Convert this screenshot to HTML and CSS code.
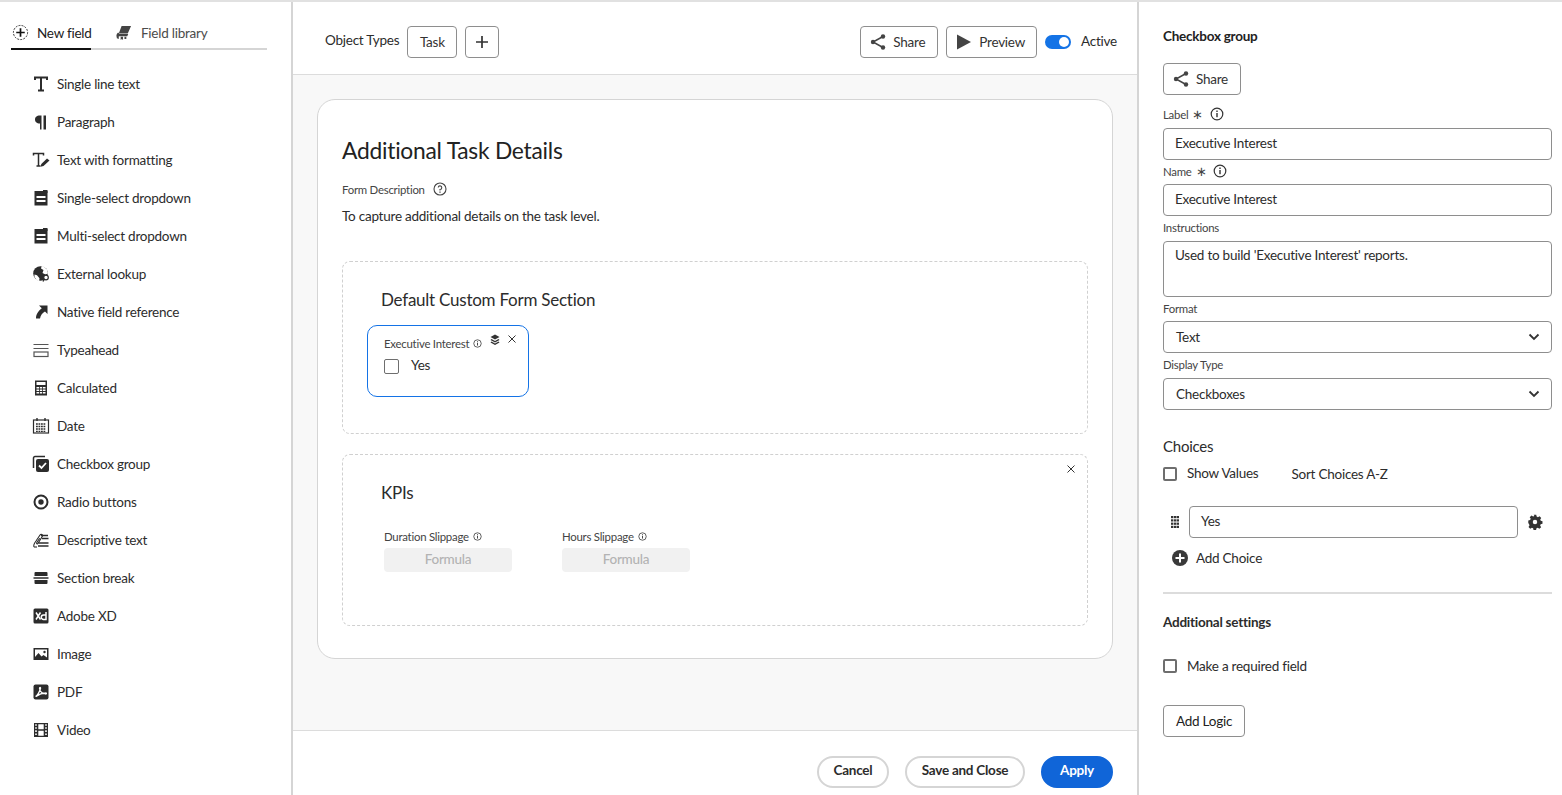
FILE: index.html
```html
<!DOCTYPE html>
<html>
<head>
    <meta charset="utf-8">
    <title>Custom Form</title>
    <link rel="stylesheet" href="styles.css">
</head>
<body>
<svg class="defs" width="0" height="0">
    <symbol id="i-share" viewBox="0 0 18 18"><path d="M14 3.5 4 9l10 5.500" fill="none" stroke="currentColor" stroke-width="1.500"/><circle cx="14" cy="3.500" r="2.200" fill="currentColor"/><circle cx="4" cy="9" r="2.200" fill="currentColor"/><circle cx="14" cy="14.500" r="2.200" fill="currentColor"/></symbol>
    <symbol id="i-info" viewBox="0 0 14 14"><circle cx="7" cy="7" r="5.800" fill="none" stroke="currentColor" stroke-width="1.200"/><rect x="6.300" y="6" width="1.400" height="4.200" fill="currentColor"/><rect x="6.300" y="3.500" width="1.400" height="1.500" fill="currentColor"/></symbol>
</svg>

<div class="app">
    <aside class="sidebar">
        <div class="tabs">
            <div class="tab tab-active">
                <svg class="tab-icon" viewBox="0 0 18 18"><circle cx="9" cy="9" r="7.500" fill="none" stroke="#222" stroke-width="1" stroke-dasharray="2 1.300"/><path d="M9 4.500v9M4.500 9h9" stroke="#111" stroke-width="1.800"/></svg>
                New field
            </div>
            <div class="tab">
                <svg class="tab-icon" viewBox="0 0 18 18"><path d="M7 2h10l-3.500 8H4zM1.500 12.500c0-1.500 1-3 2-3.500l1 1.500h9.500l-1 2.500H4v3l-2-1z" fill="#444"/><path d="M6 13.500h2.500v3.500l-1.200-1-1.300 1zM10 13.500h2v2.500h-2z" fill="#444"/></svg>
                Field library
            </div>
        </div>
        <ul class="field-list">
            <li><svg viewBox="0 0 18 18"><path d="M3 5V2.500h12V5M9 2.500v13M6 15.500h6" fill="none" stroke="#2c2c2c" stroke-width="2"/></svg>Single line text</li>
            <li><svg viewBox="0 0 18 18"><path d="M8 2.500C4.500 2.500 3 4.500 3 6.500s1.500 4 5 4v6h1.500v-14zM11.500 2.500H14v14h-2.500z" fill="#2c2c2c"/></svg>Paragraph</li>
            <li><svg viewBox="0 0 18 18"><path d="M1.500 4.500V2.500h10v2M6.500 2.500v12.500M4.500 15h4" fill="none" stroke="#2c2c2c" stroke-width="1.500"/><path d="M15 7.500l2.500 2-6 5.500-3 .8.800-2.800z" fill="#2c2c2c"/></svg>Text with formatting</li>
            <li><svg viewBox="0 0 18 18"><path d="M2.500 2h13v14.500h-13zM4.500 7v2h9V7zm0 4v2h9v-2z" fill="#2c2c2c" fill-rule="evenodd"/><rect x="11" y="1" width="4.500" height="3" fill="#2c2c2c"/></svg>Single-select dropdown</li>
            <li><svg viewBox="0 0 18 18"><path d="M2.500 2h13v14.500h-13zM4.500 7v2h9V7zm0 4v2h9v-2z" fill="#2c2c2c" fill-rule="evenodd"/><rect x="11" y="1" width="4.500" height="3" fill="#2c2c2c"/></svg>Multi-select dropdown</li>
            <li><svg viewBox="0 0 18 18"><circle cx="8.500" cy="8.500" r="7.300" fill="#2c2c2c"/><path d="M9.500 1.500l1.500-.5 4 3.500 1 4-2.500 1-3-1.500 1-3-2.500-1.500zM2.500 9.500l2.500.8 2.500 3-.5 3-2.500-1.300-2-3z" fill="#fff"/><circle cx="14" cy="12.500" r="2.300" fill="#fff" stroke="#2c2c2c" stroke-width="1.200"/><path d="M12.500 14l-1.500 2.500" stroke="#2c2c2c" stroke-width="1.300"/></svg>External lookup</li>
            <li><svg viewBox="0 0 18 18"><path d="M7 2.500h8.500V11L13 8.500C10.500 10 8.500 12 8 15.500H4C4 11 6.500 8 9.800 5.300z" fill="#2c2c2c"/></svg>Native field reference</li>
            <li><svg viewBox="0 0 18 18"><path d="M1.500 3.500h15M1.500 7.500h15" stroke="#555" stroke-width="1.200"/><rect x="2" y="11" width="14" height="4.500" fill="none" stroke="#555" stroke-width="1.200"/></svg>Typeahead</li>
            <li><svg viewBox="0 0 18 18"><path d="M3 1.500h12v15H3zM4.500 3v3h9V3zm0 5v1.500H7V8zm3.300 0v1.500h2.400V8zm3.200 0v1.500h2.500V8zM4.500 10.500V12H7v-1.500zm3.300 0V12h2.400v-1.500zm3.200 0V12h2.500v-1.500zM4.500 13v1.500H7V13zm3.300 0v1.500h2.400V13zm3.200 0v1.500h2.500V13z" fill="#2c2c2c" fill-rule="evenodd"/></svg>Calculated</li>
            <li><svg viewBox="0 0 18 18"><rect x="1.500" y="3" width="15" height="13" fill="none" stroke="#2c2c2c" stroke-width="1.200"/><path d="M5 1v3M13 1v3" stroke="#2c2c2c" stroke-width="1.400"/><path d="M4 7h10M4 9.500h10M4 12h10M4 14.300h10" stroke="#2c2c2c" stroke-width="1.300" stroke-dasharray="1.800 .7"/></svg>Date</li>
            <li><svg viewBox="0 0 18 18"><path d="M1.500 13V3a1.500 1.500 0 0 1 1.500-1.500h10" fill="none" stroke="#2c2c2c" stroke-width="1.500"/><rect x="4" y="4" width="13" height="13" rx="2" fill="#2c2c2c"/><path d="M7 10.500l2.500 2.500 4.500-5" fill="none" stroke="#fff" stroke-width="1.800"/></svg>Checkbox group</li>
            <li><svg viewBox="0 0 18 18"><circle cx="9" cy="9" r="6.500" fill="none" stroke="#2c2c2c" stroke-width="2"/><circle cx="9" cy="9" r="2.700" fill="#2c2c2c"/></svg>Radio buttons</li>
            <li><svg viewBox="0 0 18 18"><path d="M2 16c-1-2 .5-4 2-6l4-6c1-1.300 3-.5 2.500 1L6 12.500c-.7.800-1.800.2-1.300-.8l3-4.500" fill="none" stroke="#2c2c2c" stroke-width="1.100"/><path d="M9 4.500h7M10 7.500h6.500M6.500 12h10M6 15h10.500" stroke="#2c2c2c" stroke-width="1.300"/><path d="M2 16h3" stroke="#2c2c2c" stroke-width="1.100"/></svg>Descriptive text</li>
            <li><svg viewBox="0 0 18 18"><path d="M3.500 3h11a1 1 0 0 1 1 1v3h-13V4a1 1 0 0 1 1-1zM1.500 8.200h15v1.600h-15zM2.500 11h13v3a1 1 0 0 1-1 1h-11a1 1 0 0 1-1-1z" fill="#2c2c2c"/></svg>Section break</li>
            <li><svg viewBox="0 0 18 18"><path d="M3 1.500h12A1.500 1.500 0 0 1 16.500 3v12a1.500 1.500 0 0 1-1.500 1.500H3A1.500 1.500 0 0 1 1.500 15V3A1.500 1.500 0 0 1 3 1.500z" fill="#2c2c2c"/><path d="M4 5.500l4.500 7M8.500 5.500l-4.500 7" stroke="#fff" stroke-width="1.500"/><path d="M14 5v7.500h-2.500a2 2 0 0 1 0-4.500H14" fill="none" stroke="#fff" stroke-width="1.500"/></svg>Adobe XD</li>
            <li><svg viewBox="0 0 18 18"><path d="M1.500 3h15v12h-15zM3 4.500v7.500L6.500 8l3 3.500 2-1.500 3.500 2.500V4.500z" fill="#2c2c2c" fill-rule="evenodd"/><circle cx="12.500" cy="7" r="1.200" fill="#2c2c2c"/></svg>Image</li>
            <li><svg viewBox="0 0 18 18"><rect x="1.500" y="1.500" width="15" height="15" rx="2" fill="#2c2c2c"/><path d="M3.500 13.500c2-1 3.500-3.500 5-8 .3-1.500-1-1.500-1 0 .5 3 2.500 5 6.500 5.500.8-.5.500-1.200-.5-1-3 0-6 1-9.500 3.500" fill="none" stroke="#fff" stroke-width="1.300"/></svg>PDF</li>
            <li><svg viewBox="0 0 18 18"><path d="M2 2h14v14H2zM3.200 3.200v1.600h1.600V3.200zm0 3v1.600h1.600V6.200zm0 3.100v1.600h1.600V9.300zm0 3.200v1.600h1.600v-1.600zM13.200 3.200v1.600h1.600V3.200zm0 3v1.600h1.600V6.200zm0 3.100v1.600h1.600V9.300zm0 3.200v1.600h1.600v-1.600zM6.300 3.200v5h5.400v-5zm0 6.600v5h5.400v-5z" fill="#2c2c2c" fill-rule="evenodd"/></svg>Video</li>
        </ul>
    </aside>

    <main class="center">
        <header class="topbar">
            <div class="topbar-left">
                <span class="object-label">Object Types</span>
                <button class="btn btn-task">Task</button>
                <button class="btn btn-plus"><svg viewBox="0 0 14 14"><path d="M7 1v12M1 7h12" stroke="#333" stroke-width="1.700"/></svg></button>
            </div>
            <div class="topbar-right">
                <button class="btn btn-with-icon"><svg class="btn-icon" viewBox="0 0 18 18"><use href="#i-share"/></svg>Share</button>
                <button class="btn btn-with-icon btn-preview"><svg class="btn-icon" viewBox="0 0 18 18"><path d="M2 1.500l14 7.500-14 7.500z" fill="#444"/></svg>Preview</button>
                <span class="toggle"></span>
                <span class="active-label">Active</span>
            </div>
        </header>

        <div class="canvas">
            <section class="form-card">
                <h1>Additional Task Details</h1>
                <div class="form-desc-label">Form Description
                    <svg class="help" viewBox="0 0 14 14"><circle cx="7" cy="7" r="6" fill="none" stroke="#444" stroke-width="1.100"/><path d="M5.200 5.500A1.800 1.800 0 1 1 7 7.500v1" fill="none" stroke="#444" stroke-width="1.100"/><rect x="6.400" y="9.500" width="1.200" height="1.300" fill="#444"/></svg>
                </div>
                <p class="form-desc">To capture additional details on the task level.</p>

                <div class="section">
                    <h2>Default Custom Form Section</h2>
                    <div class="field-card">
                        <div class="field-title">Executive Interest <svg class="info-sm" viewBox="0 0 14 14"><use href="#i-info"/></svg></div>
                        <svg class="card-layers" viewBox="0 0 12 12"><path d="M6 .5l4.500 2.500L6 5.500 1.500 3z" fill="#333"/><path d="M2.500 5 6 7l3.500-2 1 1L6 8.500 1.500 6zM2.500 7.500 6 9.500l3.500-2 1 1L6 11 1.500 8.500z" fill="#333"/></svg>
                        <svg class="card-close" viewBox="0 0 10 10"><path d="M1.500 1.500l7 7M8.500 1.500l-7 7" stroke="#333" stroke-width="1"/></svg>
                        <div class="field-check"><span class="check check-card"></span>Yes</div>
                    </div>
                </div>

                <div class="section section-kpi">
                    <svg class="section-close" viewBox="0 0 10 10"><path d="M1.500 1.500l7 7M8.500 1.500l-7 7" stroke="#333" stroke-width="1"/></svg>
                    <h2>KPIs</h2>
                    <div class="kpi-row">
                        <div class="kpi">
                            <div class="field-title">Duration Slippage <svg class="info-sm" viewBox="0 0 14 14"><use href="#i-info"/></svg></div>
                            <div class="formula">Formula</div>
                        </div>
                        <div class="kpi">
                            <div class="field-title">Hours Slippage <svg class="info-sm" viewBox="0 0 14 14"><use href="#i-info"/></svg></div>
                            <div class="formula">Formula</div>
                        </div>
                    </div>
                </div>
            </section>
        </div>

        <footer class="footer">
            <button class="pill">Cancel</button>
            <button class="pill pill-wide">Save and Close</button>
            <button class="pill pill-primary">Apply</button>
        </footer>
    </main>

    <aside class="props">
        <h3>Checkbox group</h3>
        <button class="btn btn-with-icon btn-share"><svg class="btn-icon" viewBox="0 0 18 18"><use href="#i-share"/></svg>Share</button>

        <div class="prop-label prop-first">Label <span class="star">∗</span> <svg class="info" viewBox="0 0 14 14"><use href="#i-info"/></svg></div>
        <div class="input">Executive Interest</div>
        <div class="prop-label">Name <span class="star">∗</span> <svg class="info" viewBox="0 0 14 14"><use href="#i-info"/></svg></div>
        <div class="input">Executive Interest</div>
        <div class="prop-label prop-instr">Instructions</div>
        <div class="input input-area">Used to build 'Executive Interest' reports.</div>
        <div class="prop-label prop-format">Format</div>
        <div class="input input-select">Text<svg class="chev" viewBox="0 0 12 8"><path d="M1.500 1.500 6 6l4.500-4.500" fill="none" stroke="#333" stroke-width="1.800"/></svg></div>
        <div class="prop-label prop-instr">Display Type</div>
        <div class="input input-select">Checkboxes<svg class="chev" viewBox="0 0 12 8"><path d="M1.500 1.500 6 6l4.500-4.500" fill="none" stroke="#333" stroke-width="1.800"/></svg></div>

        <h4>Choices</h4>
        <div class="choice-opts">
            <span class="check"></span><span class="show-values">Show Values</span>
            <span class="sort">Sort Choices A-Z</span>
        </div>
        <div class="choice-row">
            <svg class="grip" viewBox="0 0 8 12"><g fill="#333"><rect x="0" y="0" width="2.400" height="2.200"/><rect x="3" y="0" width="2.400" height="2.200"/><rect x="5.800" y="0" width="2.200" height="2.200"/><rect x="0" y="3.300" width="2.400" height="2.200"/><rect x="3" y="3.300" width="2.400" height="2.200"/><rect x="5.800" y="3.300" width="2.200" height="2.200"/><rect x="0" y="6.600" width="2.400" height="2.200"/><rect x="3" y="6.600" width="2.400" height="2.200"/><rect x="5.800" y="6.600" width="2.200" height="2.200"/><rect x="0" y="9.800" width="2.400" height="2.200"/><rect x="3" y="9.800" width="2.400" height="2.200"/><rect x="5.800" y="9.800" width="2.200" height="2.200"/></g></svg>
            <div class="input input-choice">Yes</div>
            <svg class="gear" viewBox="0 0 18 18"><path d="M7.500 1h3l.5 2.300 1.500.7 2-1.200 2 2.100-1.200 2 .6 1.500 2.100.6v3l-2.200.5-.6 1.500 1.200 2-2.100 2-2-1.200-1.500.6-.5 2.100h-3l-.5-2.200-1.500-.6-2 1.200-2-2.100 1.200-2-.7-1.500L1 11V8l2.200-.5.700-1.500-1.200-2 2.100-2 2 1.200 1.500-.6z" transform="translate(.5 -.2) scale(.94)" fill="#333"/><circle cx="9" cy="9" r="2.500" fill="#fff"/></svg>
        </div>
        <div class="add-choice">
            <svg viewBox="0 0 16 16"><circle cx="8" cy="8" r="8" fill="#3a3a3a"/><path d="M8 3.500v9M3.500 8h9" stroke="#fff" stroke-width="2"/></svg>
            Add Choice
        </div>

        <hr>
        <div class="settings-title">Additional settings</div>
        <div class="required-row"><span class="check"></span>Make a required field</div>
        <button class="btn btn-logic">Add Logic</button>
    </aside>
</div>
</body>
</html>
```

FILE: styles.css
```css
* {
    box-sizing: border-box;
}

html, body {
    margin: 0;
    height: 100%;
    overflow: hidden;
}

body {
    font-family: "Lato", "Open Sans", sans-serif;
    font-size: 13.5px;
    letter-spacing: -0.018em;
    color: #2c2c2c;
    background: #fff;
}

.defs {
    display: none;
}

.app {
    display: grid;
    grid-template-columns: 293px 846px 1fr;
    height: 795px;
    border-top: 2px solid #e1e1e1;
}

/* left column */
.sidebar {
    border-right: 2px solid #d5d5d5;
    padding: 20px 24px 0 11px;
}

.tabs {
    display: flex;
    gap: 23px;
    height: 28px;
    border-bottom: 2px solid #d5d5d5;
}

.tab {
    display: flex;
    align-items: center;
    gap: 9px;
    height: 28px;
    padding-bottom: 7px;
    color: #4b4b4b;
    white-space: nowrap;
}

.tab-active {
    width: 80px;
    gap: 8px;
    color: #222;
    border-bottom: 2px solid #111;
    padding-bottom: 5px;
}

.tab-icon {
    width: 17px;
    height: 17px;
    margin-left: 1px;
    flex-shrink: 0;
}

.field-list {
    list-style: none;
    margin: 15px 0 0;
    padding: 0 0 0 21px;
}

.field-list li {
    display: flex;
    align-items: center;
    gap: 7px;
    height: 38px;
}

.field-list svg {
    width: 18px;
    height: 18px;
    flex-shrink: 0;
}

/* middle column */
.center {
    display: flex;
    flex-direction: column;
    min-height: 0;
    border-right: 2px solid #d5d5d5;
}

.topbar {
    height: 73px;
    flex-shrink: 0;
    display: flex;
    align-items: center;
    justify-content: space-between;
    padding: 7px 20px 0 32px;
    border-bottom: 1px solid #dcdcdc;
}

.topbar-left, .topbar-right {
    display: flex;
    align-items: center;
    gap: 8px;
}

.object-label {
    margin-top: -4px;
}

.btn {
    display: inline-flex;
    align-items: center;
    height: 32px;
    padding: 0 12px;
    border: 1px solid #8e8e8e;
    border-radius: 4px;
    background: #fff;
    font: inherit;
    letter-spacing: inherit;
    color: #333;
}

.btn-task {
    width: 50px;
    justify-content: center;
    padding: 0;
}

.btn-with-icon {
    padding-left: 8px;
}

.btn-preview {
    padding-right: 11px;
}

.btn-plus {
    width: 34px;
    justify-content: center;
    padding: 0;
}

.btn-plus svg {
    width: 14px;
    height: 14px;
}

.btn-icon {
    width: 18px;
    height: 18px;
    margin-right: 6px;
    color: #444;
}

.toggle {
    position: relative;
    width: 26px;
    height: 14px;
    border-radius: 7px;
    background: #1473e6;
}

.toggle::after {
    content: "";
    position: absolute;
    right: 2px;
    top: 2px;
    width: 10px;
    height: 10px;
    border-radius: 50%;
    background: #fff;
}

.active-label {
    margin-left: 2px;
    margin-top: -2px;
}

.canvas {
    flex: 1;
    background: #f8f8f8;
    padding: 24px 24px 0;
    min-height: 0;
}

.form-card {
    height: 560px;
    padding: 0 24px;
    background: #fff;
    border: 1px solid #d5d5d5;
    border-radius: 18px;
}

h1 {
    margin: 35px 0 0;
    font-size: 22.8px;
    line-height: 30px;
    font-weight: 400;
    color: #222;
}

.form-desc-label {
    display: flex;
    align-items: center;
    gap: 8px;
    margin-top: 15px;
    height: 18px;
    font-size: 11.4px;
    color: #444;
}

.help {
    width: 14px;
    height: 14px;
}

.form-desc {
    margin: 9px 0 0;
    line-height: 18px;
}

.section {
    position: relative;
    height: 173px;
    margin-top: 36px;
    padding: 26px 24px 0;
    border: 1px dashed #d0d0d0;
    border-radius: 8px;
}

.section-kpi {
    height: 172px;
    margin-top: 20px;
}

h2 {
    margin: 0 0 0 14px;
    font-size: 17px;
    line-height: 24px;
    font-weight: 400;
}

.field-card {
    position: relative;
    width: 162px;
    height: 72px;
    margin-top: 13px;
    padding: 8px 16px;
    border: 1px solid #1473e6;
    border-radius: 10px;
}

.field-title {
    display: flex;
    align-items: center;
    gap: 4px;
    height: 18px;
    font-size: 11.4px;
    color: #444;
}

.info-sm {
    width: 9px;
    height: 9px;
    color: #333;
}

.card-layers {
    position: absolute;
    top: 8px;
    left: 121px;
    width: 12px;
    height: 12px;
}

.card-close {
    position: absolute;
    top: 8px;
    left: 139px;
    width: 10px;
    height: 10px;
}

.section-close {
    position: absolute;
    top: 9px;
    right: 11px;
    width: 10px;
    height: 10px;
}

.field-check {
    display: flex;
    align-items: center;
    gap: 12px;
    margin-top: 3px;
    height: 20px;
}

.check {
    display: inline-block;
    width: 14px;
    height: 14px;
    flex-shrink: 0;
    border: 2px solid #6e6e6e;
    border-radius: 2px;
    background: #fff;
}

.check-card {
    width: 15px;
    height: 15px;
    margin-top: 3px;
    border: 1px solid #6e6e6e;
}

.kpi-row {
    display: flex;
    gap: 50px;
    margin-top: 22px;
    padding-left: 17px;
}

.kpi {
    width: 128px;
}

.formula {
    height: 24px;
    margin-top: 3px;
    border-radius: 4px;
    background: #f1f1f1;
    color: #b3b3b3;
    text-align: center;
    line-height: 23px;
    font-weight: 500;
}

.footer {
    height: 65px;
    flex-shrink: 0;
    display: flex;
    justify-content: flex-end;
    align-items: flex-start;
    gap: 16px;
    padding: 25px 24px 0 0;
    border-top: 1px solid #dcdcdc;
}

.pill {
    height: 32px;
    width: 72px;
    padding: 0 0 4px;
    border: 2px solid #d5d5d5;
    border-radius: 16px;
    background: #fff;
    font: inherit;
    letter-spacing: inherit;
    font-weight: 700;
    color: #2c2c2c;
}

.pill-wide {
    width: 120px;
}

.pill-primary {
    border-color: #1065d8;
    background: #1065d8;
    color: #fff;
}

/* right column */
.props {
    padding: 0 10px 0 24px;
}

h3 {
    margin: 25px 0 0;
    font-size: 13.5px;
    line-height: 18px;
    font-weight: 700;
    color: #222;
}

.btn-share {
    margin-top: 18px;
    display: flex;
}

.prop-label {
    display: flex;
    align-items: center;
    gap: 4px;
    height: 18px;
    margin-top: 3px;
    margin-bottom: 3px;
    padding-bottom: 2px;
    font-size: 11.4px;
    color: #444;
}

.prop-first {
    margin-top: 11px;
    margin-bottom: 4px;
}

.prop-instr {
    margin-bottom: 4px;
}

.prop-format {
    margin-top: 3px;
}

.star {
    font-size: 13px;
    line-height: 18px;
}

.info {
    width: 14px;
    height: 14px;
    margin-left: 3px;
    color: #333;
}

.input {
    display: flex;
    align-items: center;
    height: 32px;
    padding: 0 11px 3px;
    border: 1px solid #8e8e8e;
    border-radius: 4px;
    color: #2c2c2c;
}

.input-area {
    align-items: flex-start;
    height: 56px;
    padding-top: 5px;
}

.input-select {
    justify-content: space-between;
    padding: 0 11px 0 12px;
}

.chev {
    width: 12px;
    height: 8px;
}

h4 {
    margin: 26px 0 0;
    font-size: 15px;
    line-height: 20px;
    font-weight: 400;
}

.choice-opts {
    display: flex;
    align-items: center;
    margin-top: 8px;
    height: 20px;
}

.show-values {
    margin-left: 10px;
    margin-top: -3px;
}

.sort {
    margin-left: 33px;
    margin-top: -1px;
}

.choice-row {
    display: flex;
    align-items: center;
    margin-top: 22px;
}

.grip {
    width: 8px;
    height: 14px;
    margin-left: 8px;
}

.input-choice {
    flex: 1;
    margin-left: 10px;
}

.gear {
    width: 16px;
    height: 16px;
    margin: 0 9px 0 9px;
}

.add-choice {
    display: flex;
    align-items: center;
    gap: 8px;
    height: 20px;
    margin: 10px 0 0 9px;
}

.add-choice svg {
    width: 16px;
    height: 16px;
}

hr {
    margin: 24px 0 0;
    border: 0;
    border-top: 2px solid #dcdcdc;
}

.settings-title {
    margin-top: 19px;
    line-height: 18px;
    font-weight: 700;
}

.required-row {
    display: flex;
    align-items: center;
    gap: 10px;
    height: 20px;
    margin-top: 25px;
}

.btn-logic {
    display: flex;
    margin-top: 29px;
    color: #222;
}
```
